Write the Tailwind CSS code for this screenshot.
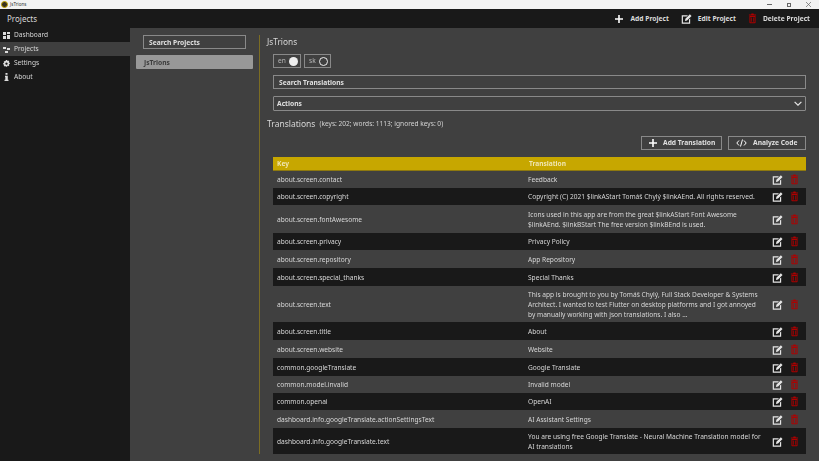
<!DOCTYPE html>
<html lang="en">
<head>
    <meta charset="UTF-8">
    <title>JsTrions</title>
    <script src="https://cdn.jsdelivr.net/npm/@tailwindcss/browser@4"></script>
</head>
<body class="w-[819px] h-[461px] overflow-hidden bg-[#404040] text-[#e0e0e0] font-['Noto_Sans',sans-serif] text-[6.6px] leading-[10px]">
    <svg class="hidden">
        <symbol id="edit" viewBox="0 0 12 12"><path d="M.8 2.400h6.800L6.300 3.700H2.100v6.600h6.600V7.200L10 5.900v5.700H.8z" fill="currentColor"/><path d="M4.300 8.600l.5-2.300L9.700 1.400l1.800 1.800-4.900 4.900z" fill="currentColor"/></symbol>
        <symbol id="trash" viewBox="0 0 10 12"><path d="M3.400 1.600l.5-1.100h2.200l.5 1.100H9v1.100H1V1.600zM1.600 3.300h6.800v7.200q0 .9-.9.9h-5q-.9 0-.9-.9zm1.100 1.100v5.900h4.600V4.400zM3.500 5h.8v4.600h-.8zM5.700 5h.8v4.600h-.8z" fill="currentColor" fill-rule="evenodd"/></symbol>
    </svg>

    <div class="opacity-[0.999]">
    <!-- title bar -->
    <div class="h-[9px] bg-[#f3f3f3] flex items-center text-[#333]">
        <div class="w-[7px] h-[7px] ml-[1px] rounded-full bg-[#3a3320] border border-[#c9a800]"></div>
        <span class="ml-[2px] text-[4.500px] leading-[9px]">JsTrions</span>
        <div class="ml-auto flex items-center mr-[8px] gap-[15px]">
            <div class="w-[5px] h-[1px] bg-[#666]"></div>
            <div class="w-[4px] h-[4px] border border-[#666]"></div>
            <svg width="5" height="5" viewBox="0 0 5 5"><path d="M0 0l5 5M5 0L0 5" stroke="#666" stroke-width=".7"/></svg>
        </div>
    </div>

    <!-- app bar -->
    <div class="h-[19px] bg-[#1a1a1a] flex items-center pl-[7px] pr-[9px]">
        <span class="text-[8px] text-[#d8d8d8] pt-[1px]">Projects</span>
        <div class="ml-auto flex items-center font-bold text-[6.700px] text-[#dcdcdc]">
            <svg class="w-[8px] h-[8px] text-white" viewBox="0 0 8 8"><path d="M3.200 0h1.600v3.200H8v1.600H4.800V8H3.200V4.800H0V3.200h3.200z" fill="currentColor"/></svg>
            <span class="ml-[7px]">Add Project</span>
            <svg class="w-[11px] h-[11px] ml-[12px] text-[#e6e6e6]"><use href="#edit"/></svg>
            <span class="ml-[6px]">Edit Project</span>
            <svg class="w-[9px] h-[11px] ml-[12px] text-[#b00000]"><use href="#trash"/></svg>
            <span class="ml-[6px]">Delete Project</span>
        </div>
    </div>

    <div class="flex h-[433px]">
        <!-- sidebar -->
        <div class="w-[130px] bg-[#1a1a1a] text-[#d8d8d8]">
            <div class="h-[14px] flex items-center pl-[3px] gap-[4px]">
                <svg class="w-[7px] h-[7px] text-[#ddd]" viewBox="0 0 7 7"><path d="M0 0h3v3H0zM4 0h3v2H4zM0 4h3v3H0zM4 3h3v4H4z" fill="currentColor"/></svg>
                <span>Dashboard</span>
            </div>
            <div class="h-[14px] flex items-center pl-[3px] gap-[4px] bg-[#404040]">
                <svg class="w-[7px] h-[7px] text-[#ddd]" viewBox="0 0 7 7"><path d="M0 1h3v2H0zM4 2h3v2H4zM2 5h3v2H2z" fill="currentColor"/></svg>
                <span>Projects</span>
            </div>
            <div class="h-[14px] flex items-center pl-[3px] gap-[4px]">
                <svg class="w-[7px] h-[7px] text-[#ddd]" viewBox="0 0 8 8"><path fill-rule="evenodd" d="M3.200 0h1.600l.2 1.200 1.100-.6 1.100 1.100-.6 1.100 1.200.2v1.600l-1.200.2.600 1.100-1.100 1.100-1.100-.6-.2 1.200H3.200L3 6.800l-1.100.6-1.100-1.100.6-1.100L.2 5V3.400l1.200-.2-.6-1.100 1.100-1.100L3 1.200zM4 2.800a1.300 1.300 0 1 0 .001 0z" fill="currentColor"/></svg>
                <span>Settings</span>
            </div>
            <div class="h-[14px] flex items-center pl-[3px] gap-[4px]">
                <svg class="w-[7px] h-[8px] text-[#ddd]" viewBox="0 0 7 8"><path d="M2.500 0h2v1.800h-2zM2 2.800h2.800v4h.7V8h-4V6.800h.8V4H2z" fill="currentColor"/></svg>
                <span>About</span>
            </div>
        </div>

        <!-- projects list -->
        <div class="w-[130px] flex">
            <div class="w-[129px] pt-[7px] pl-[6px]">
                <div class="ml-[7px] w-[103px] h-[14px] border border-[#8a8a8a] flex items-center pl-[5px] pt-[2px] font-bold text-[6.700px] text-[#e0e0e0]">Search Projects</div>
                <div class="mt-[6px] w-[117px] h-[14px] bg-[#999] rounded-[1px] flex items-center pl-[8px] pt-[2px] font-bold text-[6.700px] text-[#3c3c3c]">JsTrions</div>
            </div>
            <div class="w-[1px] h-[419px] mt-[7px] bg-[#7d6e24]"></div>
        </div>

        <!-- detail -->
        <div class="w-[559px] pl-[7px] pr-[13px] pt-[7px]">
            <div class="h-[14px] flex items-center text-[8.300px] text-[#d8d8d8]">JsTrions</div>
            <div class="mt-[5px] ml-[6px] flex gap-[3px] text-[#b8b8b8]">
                <div class="w-[28px] h-[14px] border border-[#8a8a8a] flex items-center pl-[4px]">en<span class="ml-[3px] w-[9px] h-[9px] rounded-full bg-[#efefef]"></span></div>
                <div class="w-[27px] h-[14px] border border-[#8a8a8a] flex items-center pl-[4px]">sk<span class="ml-[3px] w-[9px] h-[9px] rounded-full border border-[#efefef]"></span></div>
            </div>
            <div class="mt-[7px] ml-[6px] h-[14px] border border-[#8a8a8a] flex items-center pl-[5px] pt-[2px] font-bold text-[6.700px] text-[#e0e0e0]">Search Translations</div>
            <div class="mt-[7px] ml-[6px] h-[15px] border border-[#8a8a8a] rounded-[1px] flex items-center pl-[3px] pr-[3px] font-bold text-[6.700px] text-[#e0e0e0]">
                <span>Actions</span>
                <svg class="ml-auto w-[8px] h-[5px]" viewBox="0 0 8 5"><path d="M.6.8l3.400 3.400L7.400.8" fill="none" stroke="#e6e6e6" stroke-width="1.200"/></svg>
            </div>
            <div class="mt-[7px] h-[12px] flex items-center">
                <span class="text-[8.500px] text-[#d8d8d8]">Translations</span>
                <span class="ml-[4px] text-[#d4d4d4]">(keys: 202; words: 1113; ignored keys: 0)</span>
            </div>
            <div class="mt-[6px] flex justify-end gap-[6px] font-bold text-[6.700px] text-[#e0e0e0]">
                <div class="w-[81px] h-[14px] border border-[#8a8a8a] flex items-center pl-[7px]">
                    <svg class="w-[8px] h-[8px] text-white" viewBox="0 0 8 8"><path d="M3.200 0h1.600v3.200H8v1.600H4.800V8H3.200V4.800H0V3.200h3.200z" fill="currentColor"/></svg>
                    <span class="ml-[6px]">Add Translation</span>
                </div>
                <div class="w-[78px] h-[14px] border border-[#8a8a8a] flex items-center pl-[7px]">
                    <svg class="w-[11px] h-[8px] text-white" viewBox="0 0 11 8"><path d="M3 1.500L.8 4 3 6.500M8 1.500L10.200 4 8 6.500M6.500.5L4.500 7.500" fill="none" stroke="currentColor" stroke-width="1"/></svg>
                    <span class="ml-[6px]">Analyze Code</span>
                </div>
            </div>

            <!-- table -->
            <div class="ml-[6px] mt-[7px] text-[#d8d8d8]">
                <div class="h-[14px] bg-[#c8a800] border-b border-[#8f7a10] flex items-center font-bold text-[#f0e6b0]">
                    <span class="w-[256px] pl-[4px]">Key</span>
                    <span>Translation</span>
                </div>
                <div id="rows"></div>
            </div>
        </div>
    </div>
    </div>

    <script>
        const rows = [
            ["about.screen.contact", "Feedback", "h-[17px]"],
            ["about.screen.copyright", "Copyright (C) 2021 $linkAStart Tomáš Chylý $linkAEnd. All rights reserved.", "h-[17px] bg-[#1a1a1a]"],
            ["about.screen.fontAwesome", "Icons used in this app are from the great $linkAStart Font Awesome $linkAEnd. $linkBStart The free version $linkBEnd is used.", "h-[28px]"],
            ["about.screen.privacy", "Privacy Policy", "h-[17px] bg-[#1a1a1a]"],
            ["about.screen.repository", "App Repository", "h-[18px]"],
            ["about.screen.special_thanks", "Special Thanks", "h-[18px] bg-[#1a1a1a]"],
            ["about.screen.text", "This app is brought to you by Tomáš Chylý, Full Stack Developer &amp; Systems Architect. I wanted to test Flutter on desktop platforms and I got annoyed by manually working with json translations. I also ...", "h-[36px]"],
            ["about.screen.title", "About", "h-[18px] bg-[#1a1a1a]"],
            ["about.screen.website", "Website", "h-[18px]"],
            ["common.googleTranslate", "Google Translate", "h-[18px] bg-[#1a1a1a]"],
            ["common.model.invalid", "Invalid model", "h-[17px]"],
            ["common.openai", "OpenAI", "h-[17px] bg-[#1a1a1a]"],
            ["dashboard.info.googleTranslate.actionSettingsText", "AI Assistant Settings", "h-[18px]"],
            ["dashboard.info.googleTranslate.text", "You are using free Google Translate - Neural Machine Translation model for AI translations", "h-[26px] bg-[#1a1a1a]"],
        ];

        document.getElementById("rows").innerHTML = rows.map(([key, value, cls]) => `
            <div class="${cls} flex items-center">
                <span class="w-[255px] pl-[4px] pt-[1px]">${key}</span>
                <span class="w-[233px] pt-[1px]">${value}</span>
                <span class="ml-auto mr-[7px] flex gap-[7px] items-center">
                    <svg class="w-[11px] h-[11px] text-[#e6e6e6]"><use href="#edit"/></svg>
                    <svg class="w-[9px] h-[11px] text-[#b00000]"><use href="#trash"/></svg>
                </span>
            </div>`).join("");
    </script>
</body>
</html>
